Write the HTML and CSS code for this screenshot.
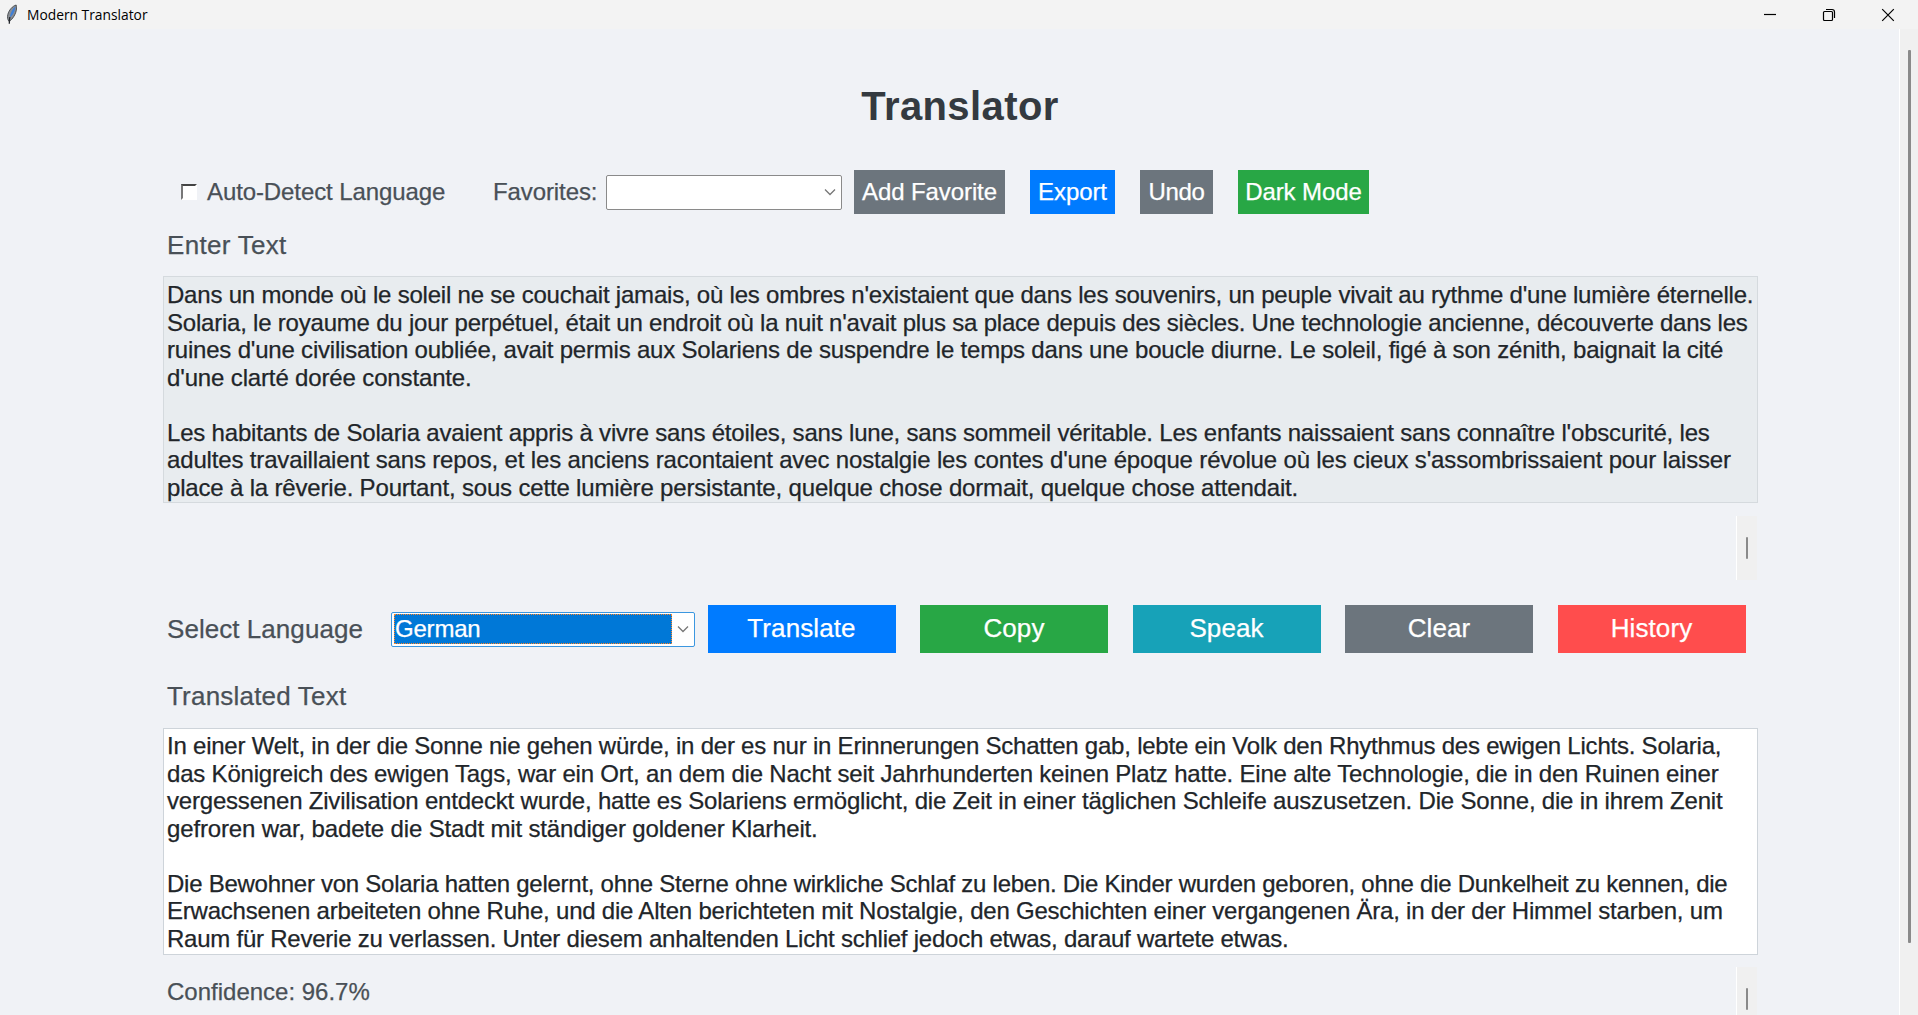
FILE: index.html
```html
<!DOCTYPE html>
<html lang="en">
<head>
<meta charset="utf-8">
<title>Modern Translator</title>
<link rel="stylesheet" href="styles.css">
</head>
<body>
<div class="window">
  <header class="titlebar">
    <svg class="feather" width="12" height="21" viewBox="0 0 12 21"><path d="M10.200 1C6.500 2 3 6 1.800 10.500C1.200 13 1.500 15.500 3 17.500C6.500 15.500 10 10 10.500 5Z" fill="#8b8f94" stroke="#34373b" stroke-width=".8"/><path d="M9.500 2.500C6.500 4.500 4.500 8.500 3.800 13.500C6.500 11.500 9 8 9.500 2.500Z" fill="#3f7fd6"/><path d="M3.800 13C3.500 15.500 3.400 17.500 3.300 19.800" fill="none" stroke="#24272b" stroke-width="1.300"/></svg>
    <span class="app-name">Modern Translator</span>
    <div class="window-controls">
      <svg width="14" height="14" viewBox="0 0 14 14"><path d="M1 6.500H13"/></svg>
      <svg width="14" height="14" viewBox="0 0 14 14"><rect x="1.500" y="3.500" width="9" height="9" rx="1"/><path d="M4 1.500H10Q12.500 1.500 12.500 4V10"/></svg>
      <svg width="14" height="14" viewBox="0 0 14 14"><path d="M1.200 1.200L12.800 12.800M12.800 1.200L1.200 12.800"/></svg>
    </div>
  </header>
  <div class="viewport">
    <main class="page">
      <h1>Translator</h1>
      <div class="toolbar">
        <label class="check"><span class="box"></span><span>Auto-Detect Language</span></label>
        <span class="fav">Favorites:</span>
        <div class="combo combo-fav"><svg class="chev" width="12" height="8" viewBox="0 0 12 8"><path d="M1 1.500L6 6.500L11 1.500"/></svg></div>
        <button class="btn gray add">Add Favorite</button>
        <button class="btn blue export">Export</button>
        <button class="btn gray undo">Undo</button>
        <button class="btn green dark">Dark Mode</button>
      </div>
      <div class="label l-enter">Enter Text</div>
      <div class="text input">
        <p class="f1">Dans un monde où le soleil ne se couchait jamais, où les ombres n'existaient que dans les souvenirs, un peuple vivait au rythme d'une lumière éternelle.</p>
        <p class="f2">Solaria, le royaume du jour perpétuel, était un endroit où la nuit n'avait plus sa place depuis des siècles. Une technologie ancienne, découverte dans les</p>
        <p class="f3">ruines d'une civilisation oubliée, avait permis aux Solariens de suspendre le temps dans une boucle diurne. Le soleil, figé à son zénith, baignait la cité</p>
        <p class="f4">d'une clarté dorée constante.</p>
        <p></p>
        <p class="f5">Les habitants de Solaria avaient appris à vivre sans étoiles, sans lune, sans sommeil véritable. Les enfants naissaient sans connaître l'obscurité, les</p>
        <p class="f6">adultes travaillaient sans repos, et les anciens racontaient avec nostalgie les contes d'une époque révolue où les cieux s'assombrissaient pour laisser</p>
        <p class="f7">place à la rêverie. Pourtant, sous cette lumière persistante, quelque chose dormait, quelque chose attendait.</p>
      </div>
      <div class="scroll small"><i></i></div>
      <div class="actions">
        <span class="label">Select Language</span>
        <div class="combo combo-lang"><span class="sel">German</span><svg class="chev" width="12" height="8" viewBox="0 0 12 8"><path d="M1 1.500L6 6.500L11 1.500"/></svg></div>
        <button class="big blue">Translate</button>
        <button class="big green">Copy</button>
        <button class="big teal">Speak</button>
        <button class="big gray">Clear</button>
        <button class="big red">History</button>
      </div>
      <div class="label l-out">Translated Text</div>
      <div class="text output">
        <p class="g1">In einer Welt, in der die Sonne nie gehen würde, in der es nur in Erinnerungen Schatten gab, lebte ein Volk den Rhythmus des ewigen Lichts. Solaria,</p>
        <p class="g2">das Königreich des ewigen Tags, war ein Ort, an dem die Nacht seit Jahrhunderten keinen Platz hatte. Eine alte Technologie, die in den Ruinen einer</p>
        <p class="g3">vergessenen Zivilisation entdeckt wurde, hatte es Solariens ermöglicht, die Zeit in einer täglichen Schleife auszusetzen. Die Sonne, die in ihrem Zenit</p>
        <p class="g4">gefroren war, badete die Stadt mit ständiger goldener Klarheit.</p>
        <p></p>
        <p class="g5">Die Bewohner von Solaria hatten gelernt, ohne Sterne ohne wirkliche Schlaf zu leben. Die Kinder wurden geboren, ohne die Dunkelheit zu kennen, die</p>
        <p class="g6">Erwachsenen arbeiteten ohne Ruhe, und die Alten berichteten mit Nostalgie, den Geschichten einer vergangenen Ära, in der der Himmel starben, um</p>
        <p class="g7">Raum für Reverie zu verlassen. Unter diesem anhaltenden Licht schlief jedoch etwas, darauf wartete etwas.</p>
      </div>
      <div class="footer"><span class="conf">Confidence: 96.7%</span><div class="scroll small"><i></i></div></div>
    </main>
    <div class="scroll main-scroll"><i></i></div>
  </div>
</div>
</body>
</html>
```
FILE: styles.css
```css
* { box-sizing: border-box; }
body { margin: 0; overflow: hidden; font-family: "Liberation Sans", Arial, sans-serif; font-size: 24px; color: #495057; }

.window { width: 1918px; height: 1015px; background: #f0f2f6; display: flex; flex-direction: column; overflow: hidden; white-space: nowrap; }
.titlebar { height: 29px; flex: none; background: #f3f3f3; display: flex; align-items: center; padding-left: 6px; color: #000; font: 13.800px "Open Sans", sans-serif; }
.app-name { margin-left: 9px; }
.window-controls { margin-left: auto; display: flex; gap: 45px; padding-right: 23px; }
.window-controls svg { fill: none; stroke: #000; stroke-width: 1.200; display: block; }

.viewport { flex: 1; display: flex; min-height: 0; -webkit-text-stroke: .25px currentColor; }
.page { flex: 1; padding-left: 163px; display: flex; flex-direction: column; }
h1 { margin: 0; width: 1594px; height: 141px; line-height: 155px; text-align: center; font-size: 40px; letter-spacing: .4px; color: #343a40; flex: none; -webkit-text-stroke: 0; }

.toolbar { display: flex; height: 44px; align-items: center; flex: none; letter-spacing: -.1px; }
.check { display: flex; align-items: center; width: 330px; padding-left: 18px; gap: 10px; }
.box { width: 16px; height: 16px; background: #fff; border: 2px solid #fff; border-top-color: #444; border-left-color: #777; }
.fav { width: 113px; }
.combo { background: #fff; border: 1px solid #8a8a8a; border-radius: 2px; height: 35px; display: flex; align-items: center; justify-content: flex-end; padding: 2px 5px 2px 2px; }
.combo-fav { width: 236px; }
.chev { fill: none; stroke: #777; stroke-width: 1.300; }

button { border: 0; padding: 0; color: #fff; font: inherit; text-align: center; }
.btn { height: 44px; margin-right: 25px; letter-spacing: -.1px; }
.add { width: 151px; margin-left: 12px; }
.export { width: 85px; }
.undo { width: 73px; letter-spacing: -.4px; }
.dark { width: 131px; }
.gray { background: #6c757d; }
.blue { background: #007bff; }
.green { background: #28a745; }
.teal { background: #17a2b8; }
.red { background: #ff4d4d; }

.label { font-size: 26px; padding-left: 4px; }
.l-enter { height: 62px; line-height: 63px; flex: none; letter-spacing: .3px; }

.text { width: 1595px; height: 227px; flex: none; border: 1px solid #d5dade; padding: 3px 0 0 3px; color: #212529; }
.text p { margin: 0; height: 27.500px; line-height: 28px; }
.input { background: #e8ecef; padding-top: 4px; }
.output { background: #fff; border-color: #ced4da; }
.f1 { letter-spacing: -.209px; }
.f2 { letter-spacing: -.214px; }
.f3 { letter-spacing: -.199px; }
.f4 { letter-spacing: -.145px; }
.f5 { letter-spacing: -.195px; }
.f6 { letter-spacing: -.156px; }
.f7 { letter-spacing: -.174px; }
.g1 { letter-spacing: -.223px; }
.g2 { letter-spacing: -.195px; }
.g3 { letter-spacing: -.195px; }
.g4 { letter-spacing: -.155px; }
.g5 { letter-spacing: -.26px; }
.g6 { letter-spacing: -.214px; }
.g7 { letter-spacing: -.233px; }

.scroll { display: flex; justify-content: center; background: #f0f0f0; border-left: 1px solid #fff; }
.scroll i { background: #8a8a8a; border-radius: 1px; width: 3px; }
.small { width: 21px; height: 64px; margin: 13px 0 0 1573px; padding: 21px 0; flex: none; }
.small i { width: 2px; }

.actions { display: flex; align-items: center; height: 48px; margin-top: 25px; flex: none; }
.actions > .label { width: 228px; letter-spacing: .05px; }
.combo-lang { width: 304px; border-color: #3b97e0; justify-content: space-between; margin-right: 12.500px; }
.sel { background: #0078d7; color: #fff; width: 278px; height: 30px; line-height: 28px; border: 1px dotted #ff8728; letter-spacing: -.2px; }
.big { width: 188px; height: 48px; margin-right: 24.500px; padding-bottom: 2px; font-size: 26px; letter-spacing: .1px; }
.l-out { height: 75px; line-height: 86px; flex: none; letter-spacing: .2px; }

.footer { display: flex; height: 60px; }
.conf { padding: 23px 0 0 4px; width: 400px; }
.footer .small { margin: 12px 0 0 1173px; }
.main-scroll { width: 19px; padding: 21px 0 72px; }
```
